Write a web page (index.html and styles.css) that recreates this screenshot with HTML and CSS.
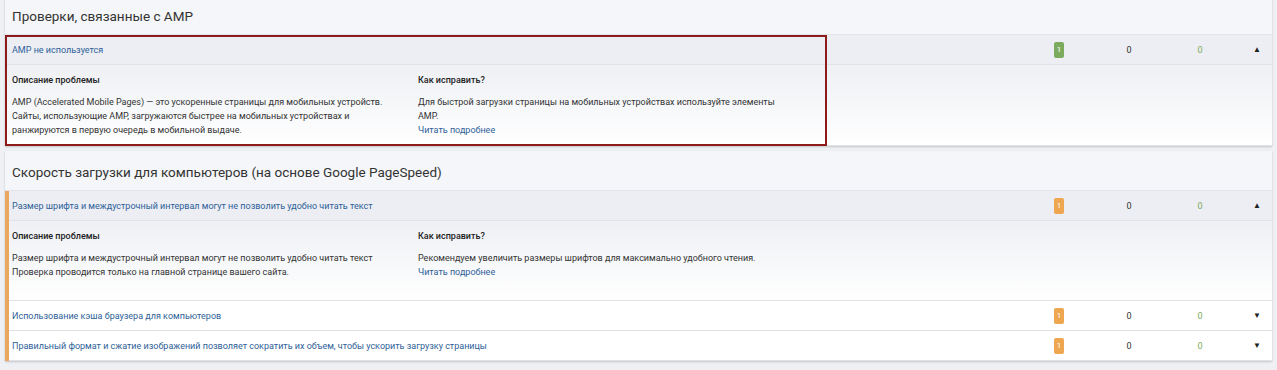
FILE: index.html
```html
<!DOCTYPE html>
<html lang="ru">
<head>
    <meta charset="UTF-8">
    <meta name="viewport" content="width=device-width, initial-scale=1.0">
    <title>Проверки сайта</title>
    <link rel="stylesheet" href="styles.css">
</head>
<body>
    <div class="page">
        <section class="panel">
            <h2 class="panel-title">Проверки, связанные с AMP</h2>
            <div class="issue">
                <div class="issue-row">
                    <a href="#" class="issue-name">AMP не используется</a>
                    <span class="col"><span class="badge ok">1</span></span>
                    <span class="col">0</span>
                    <span class="col green">0</span>
                    <span class="toggle">&#9650;</span>
                </div>
                <div class="issue-body">
                    <div class="body-col">
                        <h4>Описание проблемы</h4>
                        <p>AMP (Accelerated Mobile Pages) — это ускоренные страницы для мобильных устройств. Сайты, использующие AMP, загружаются быстрее на мобильных устройствах и ранжируются в первую очередь в мобильной выдаче.</p>
                    </div>
                    <div class="body-col">
                        <h4>Как исправить?</h4>
                        <p>Для быстрой загрузки страницы на мобильных устройствах используйте элементы AMP.</p>
                        <a href="#" class="more">Читать подробнее</a>
                    </div>
                </div>
                <div class="highlight"></div>
            </div>
        </section>

        <section class="panel">
            <h2 class="panel-title">Скорость загрузки для компьютеров (на основе Google PageSpeed)</h2>
            <div class="issue warn">
                <div class="issue-row">
                    <a href="#" class="issue-name">Размер шрифта и междустрочный интервал могут не позволить удобно читать текст</a>
                    <span class="col"><span class="badge">1</span></span>
                    <span class="col">0</span>
                    <span class="col green">0</span>
                    <span class="toggle">&#9650;</span>
                </div>
                <div class="issue-body">
                    <div class="body-col">
                        <h4>Описание проблемы</h4>
                        <p>Размер шрифта и междустрочный интервал могут не позволить удобно читать текст<br>Проверка проводится только на главной странице вашего сайта.</p>
                    </div>
                    <div class="body-col">
                        <h4>Как исправить?</h4>
                        <p>Рекомендуем увеличить размеры шрифтов для максимально удобного чтения.</p>
                        <a href="#" class="more">Читать подробнее</a>
                    </div>
                </div>
            </div>
            <div class="issue warn closed">
                <div class="issue-row">
                    <a href="#" class="issue-name">Использование кэша браузера для компьютеров</a>
                    <span class="col"><span class="badge">1</span></span>
                    <span class="col">0</span>
                    <span class="col green">0</span>
                    <span class="toggle">&#9660;</span>
                </div>
            </div>
            <div class="issue warn closed">
                <div class="issue-row">
                    <a href="#" class="issue-name">Правильный формат и сжатие изображений позволяет сократить их объем, чтобы ускорить загрузку страницы</a>
                    <span class="col"><span class="badge">1</span></span>
                    <span class="col">0</span>
                    <span class="col green">0</span>
                    <span class="toggle">&#9660;</span>
                </div>
            </div>
        </section>
    </div>
</body>
</html>
```

FILE: styles.css
```css
body {
    margin: 0;
    font-family: Roboto, "Liberation Sans", sans-serif;
    background: #eef0f4;
    color: #333;
}
.page {
    margin-top: -5px;
    padding: 0 5px;
}
.panel {
    background: #fff;
    margin-bottom: 5px;
    box-shadow: 0 1px 2px rgba(0, 0, 0, 0.18);
}
.panel-title {
    margin: 0;
    height: 39px;
    line-height: 42px;
    padding-left: 7px;
    font-size: 13.5px;
    font-weight: normal;
    color: #333;
    background: #f5f6f9;
    border-bottom: 1px solid #e2e4e9;
}
.issue {
    position: relative;
}
.issue.warn {
    border-left: 4px solid #eba75d;
}
.issue-row {
    display: flex;
    align-items: center;
    height: 29px;
    padding-left: 7px;
    font-size: 9px;
    background: #eceef3;
    border-bottom: 1px solid #e0e2e8;
}
.issue.warn .issue-row {
    padding-left: 3px;
}
.issue.closed .issue-row {
    background: #fff;
}
.issue-name {
    flex: 1;
    color: #2f5f98;
    text-decoration: none;
}
.col {
    width: 70px;
    text-align: center;
}
.col:nth-of-type(1) {
    width: 68px;
}
.col:nth-of-type(2) {
    width: 72px;
}
.green {
    color: #7bab5c;
}
.badge {
    display: inline-block;
    width: 10px;
    height: 16px;
    line-height: 16px;
    border-radius: 2px;
    background: #eea650;
    color: #fff;
    font-size: 8px;
}
.badge.ok {
    background: #7dab5e;
}
.toggle {
    width: 37px;
    padding-right: 11px;
    box-sizing: border-box;
    text-align: right;
    font-size: 8px;
    color: #222;
}
.issue-body {
    display: flex;
    min-height: 80px;
    box-sizing: border-box;
    padding: 8px 7px 8px;
    font-size: 9px;
    background: linear-gradient(#eef0f4, #fff);
    border-bottom: 1px solid #e0e2e8;
}
.issue.warn .issue-body {
    padding-left: 3px;
}
.body-col {
    width: 406px;
}
.body-col h4 {
    margin: 0 0 8px;
    line-height: 14px;
    font-size: 9px;
    font-weight: 500;
    color: #222;
}
.body-col p {
    margin: 0;
    width: 382px;
    line-height: 14px;
    color: #333;
}
.body-col + .body-col p {
    width: 372px;
}
.more {
    display: block;
    line-height: 14px;
    color: #2f5f98;
    text-decoration: none;
}
.highlight {
    position: absolute;
    left: 0;
    top: 0;
    bottom: 0;
    width: 822px;
    border: 2px solid #8e1b1b;
    box-sizing: border-box;
    pointer-events: none;
}
```
